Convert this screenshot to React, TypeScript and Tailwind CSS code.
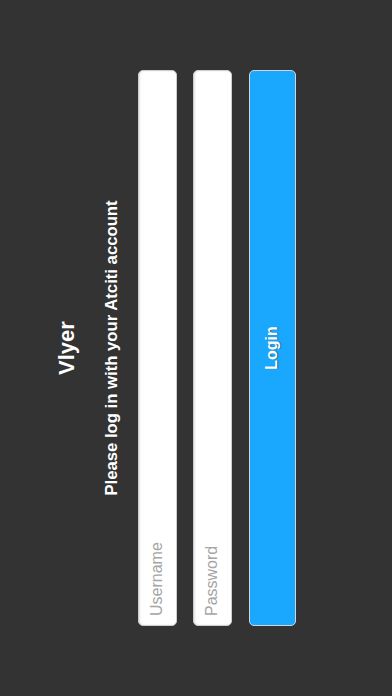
import { useState } from "react"

export default function App() {
  const [username, setUsername] = useState("")
  const [password, setPassword] = useState("")

  return (
    <div className="relative w-[392px] h-[696px] overflow-hidden bg-[#333333] font-['Liberation_Sans',Arial,sans-serif]">
      {/* landscape screen, turned a quarter to the left */}
      <div className="w-[696px] h-[392px] origin-top-left -rotate-90 translate-y-[696px] flex flex-col items-center pt-[56px]">
        <h1 className="text-[22px] leading-none font-bold text-white">Vlyer</h1>
        <p className="mt-[26px] text-[16.7px] leading-none font-bold text-white">
          Please log in with your Atciti account
        </p>

        <form className="mt-[17px] w-[556px] flex flex-col" onSubmit={(e) => e.preventDefault()}>
          <input
            type="text"
            value={username}
            onChange={(e) => setUsername(e.target.value)}
            placeholder="Username"
            className="h-[39px] w-full rounded-[5px] border border-[#cdcdcd] bg-white px-[9px] text-[16px] text-[#222] placeholder:text-[#a5a5a5] shadow-[inset_0_1px_2px_rgba(0,0,0,0.12)] outline-none"
          />
          <input
            type="password"
            value={password}
            onChange={(e) => setPassword(e.target.value)}
            placeholder="Password"
            className="mt-[16px] h-[39px] w-full rounded-[5px] border border-[#cdcdcd] bg-white px-[9px] text-[16px] text-[#222] placeholder:text-[#a5a5a5] shadow-[inset_0_1px_2px_rgba(0,0,0,0.12)] outline-none"
          />
          <button
            type="submit"
            className="mt-[17px] h-[47px] w-full rounded-[5px] border border-[#cfd6dc] bg-[#1aa8ff] text-[16px] font-bold text-white [text-shadow:0_1px_1px_rgba(0,0,0,0.45)]"
          >
            Login
          </button>
        </form>
      </div>
    </div>
  )
}
